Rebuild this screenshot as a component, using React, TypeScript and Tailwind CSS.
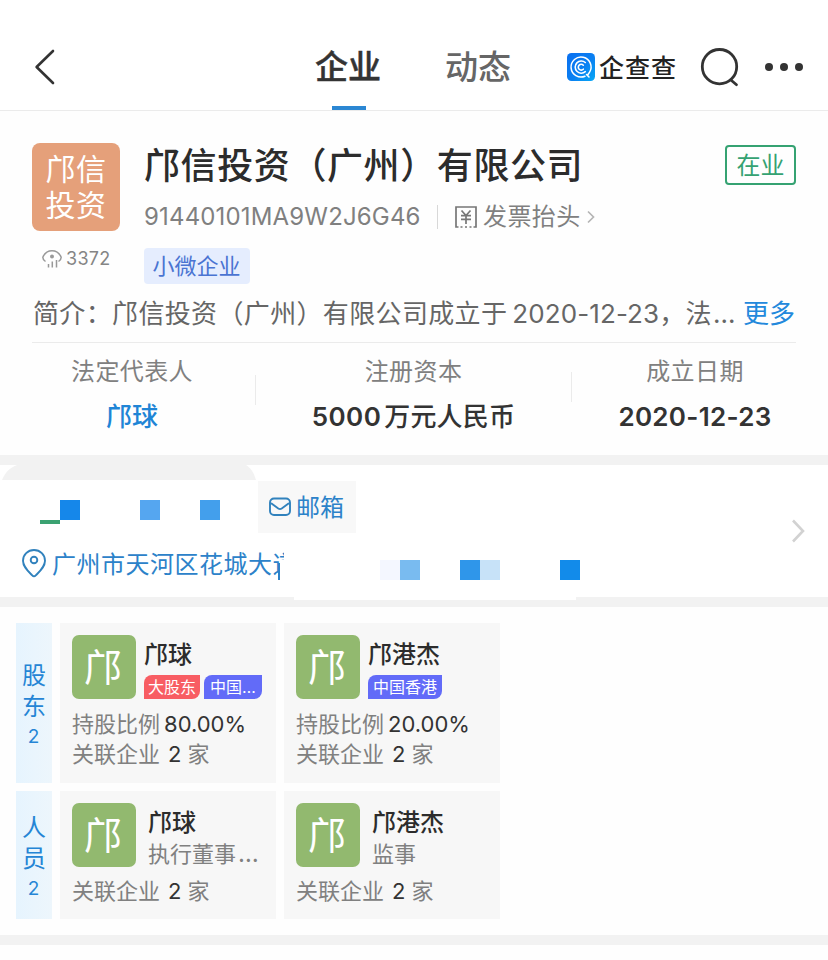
import React from "react";

const divider = "h-[30px] w-px bg-[#ebebeb]";

function Header() {
  return (
    <header className="flex h-[111px] items-start border-b border-[#ebebeb] bg-white">
      <svg className="ml-[34px] mt-[48px] h-[38px] w-[24px]" viewBox="0 0 24 38" fill="none" stroke="#333" strokeWidth="2.6" strokeLinecap="round" strokeLinejoin="round">
        <path d="M19 3 2.6 19 19 35" />
      </svg>
      <nav className="ml-[256px] flex text-[33px] leading-[40px]">
        <div className="flex h-[110px] w-[68px] flex-col items-center pt-[47px] font-medium text-[#333]">
          <span className="whitespace-nowrap [-webkit-text-stroke:0.5px_#333]">企业</span>
          <span className="ml-[2px] mt-[19px] h-[4px] w-[34px] bg-[#2b87d3]" />
        </div>
        <div className="ml-[62px] w-[68px] whitespace-nowrap pt-[47px] text-center font-medium text-[#666]">动态</div>
      </nav>
      <div className="ml-[55px] mt-[53px] flex h-[28px] items-center">
        <svg className="h-[28px] w-[28px]" viewBox="0 0 28 28" fill="none">
          <defs>
            <linearGradient id="brand" x1="0" y1="0" x2="1" y2="1">
              <stop offset="0" stopColor="#0a6ff0" />
              <stop offset="0.55" stopColor="#0a80f2" />
              <stop offset="1" stopColor="#08a9f5" />
            </linearGradient>
          </defs>
          <rect width="28" height="28" rx="4.5" fill="url(#brand)" />
          <g stroke="#fff" strokeLinecap="round">
            <path d="M18 23.2A10 10 0 1 1 22.6 19.2L21 21.5M19.5 21.5 22 24" strokeWidth="1.5" />
            <path d="M18.3 9.5A6.1 6.1 0 1 0 18.3 18.7" strokeWidth="1.6" />
            <path d="M16.3 12.2A2.9 2.9 0 1 0 16.3 16.2" strokeWidth="1.6" />
          </g>
        </svg>
        <span className="ml-[4px] mt-[2px] w-[78px] whitespace-nowrap text-[25px] font-medium leading-[28px] tracking-[1px] text-[#222]">企查查</span>
      </div>
      <svg className="ml-[23px] mt-[47px] h-[42px] w-[40px]" viewBox="0 0 40 42" fill="none" stroke="#333" strokeWidth="2.8" strokeLinecap="round">
        <circle cx="19.5" cy="19.7" r="17.2" />
        <path d="m31.5 33.5 5 4.2" />
      </svg>
      <div className="ml-[25px] mt-[63px] flex gap-[7px]">
        <i className="size-[8px] rounded-full bg-[#333]" />
        <i className="size-[8px] rounded-full bg-[#333]" />
        <i className="size-[8px] rounded-full bg-[#333]" />
      </div>
    </header>
  );
}

function Stat({ label, width, children }: { label: string; width: string; children: React.ReactNode }) {
  return (
    <div className={`${width} whitespace-nowrap text-center`}>
      <div className="text-[24px] leading-[30px] tracking-[0.4px] text-[#808080]">{label}</div>
      <div className="mt-[15px] text-[26px] font-medium leading-[30px] text-[#333]">{children}</div>
    </div>
  );
}

function Company() {
  return (
    <section className="h-[344px] pt-[32px]">
      <div className="flex px-[32px]">
        <div className="w-[88px]">
          <div className="flex size-[88px] flex-col items-center justify-center rounded-[8px] bg-[#e5a07a] text-[30px] leading-[36px] tracking-[0.5px] text-white">
            <span>邝信</span>
            <span>投资</span>
          </div>
          <div className="ml-[10px] mt-[16px] flex h-[24px] items-center whitespace-nowrap">
            <svg className="h-[20px] w-[20px]" viewBox="0 0 20 20" fill="none" stroke="#999" strokeWidth="1.5">
              <path d="M3.5 12.5C1.6 11.2.8 9.5.8 8.2 2.8 4 6 1.8 10 1.8s7.200 2.200 9.200 6.400c0 1.500-.8 3-2.700 4.300" />
              <circle cx="10" cy="7.500" r="2" fill="#999" stroke="none" />
              <path d="M6.500 15v3.500M10.300 12.500v6M14.500 11v7.500" />
            </svg>
            <span className="ml-[4px] text-[18px] leading-[24px] tracking-[0.3px] text-[#858585]">3372</span>
          </div>
        </div>
        <div className="ml-[24px] flex-1">
          <div className="flex h-[44px] items-center justify-between">
            <h1 className="whitespace-nowrap pt-px text-[36px] font-medium leading-[44px] tracking-[0.6px] text-[#2c2c2c]">邝信投资（广州）有限公司</h1>
            <div className="flex h-[40px] w-[71px] items-center justify-center rounded-[4px] border-2 border-[#35a272] pt-px text-[24px] leading-[30px] text-[#35a272]">在业</div>
          </div>
          <div className="mt-[14px] flex h-[32px] items-center whitespace-nowrap text-[24px] leading-[32px] text-[#808080]">
            <span className="w-[293px] tracking-[0.16px]">91440101MA9W2J6G46</span>
            <span className="h-[24px] w-px bg-[#d8d8d8]" />
            <svg className="ml-[17px] h-[22px] w-[22px]" viewBox="0 0 22 22" fill="none" stroke="#777" strokeWidth="1.700">
              <path d="M3.500 21H1V1h20v20h-2.500M5.500 21h2M10 21h2M14.500 21h2M6.500 4.500l4.500 5 4.500-5M6 9.700h10M6 13.300h10M11 9.500V18" />
            </svg>
            <span className="ml-[6px] tracking-[0.4px]">发票抬头</span>
            <svg className="ml-[6px] h-[14px] w-[8px]" viewBox="0 0 8 14" fill="none" stroke="#b5b5b5" strokeWidth="1.700">
              <path d="m1 1.500 5.500 5.500L1 12.500" />
            </svg>
          </div>
          <div className="mt-[15px] flex h-[36px] w-[106px] items-center justify-center rounded-[4px] bg-[#e5edfe] pr-px text-[22px] leading-[30px] text-[#4a74d2]">小微企业</div>
        </div>
      </div>
      <div className="mx-[32px] mt-[14px] flex h-[45px] justify-between whitespace-nowrap border-b border-[#ebebeb] text-[26px] leading-[32px] text-[#666]">
        <span className="ml-px tracking-[0.35px]">简介：邝信投资（广州）有限公司成立于<span className="ml-[5px] tracking-[0.1px]">2020-12-23</span>，法<span className="ml-px tracking-[1px]">…</span></span>
        <span className="mr-px text-[#2389dc]">更多</span>
      </div>
      <div className="ml-[8px] flex pt-[14px]">
        <Stat label="法定代表人" width="w-[248px]">
          <span className="text-[#1f85d6]">邝球</span>
        </Stat>
        <div className={`${divider} -ml-px mt-[18px]`} />
        <Stat label="注册资本" width="w-[315px]">
          <span className="mr-[3px] font-semibold tracking-[0.4px]">5000</span>
          <span className="tracking-[0.2px]">万元人民币</span>
        </Stat>
        <div className={`${divider} mt-[15px]`} />
        <Stat label="成立日期" width="w-[246px]">
          <span className="font-semibold tracking-[0.3px]">2020-12-23</span>
        </Stat>
      </div>
    </section>
  );
}

function Contact() {
  return (
    <section className="relative h-[132px] bg-white">
      <svg className="absolute left-0 top-0 h-[15px] w-[260px]" viewBox="0 0 260 15">
        <path d="M2 15C5 8 9 3 17 0H246C251 3 254 8 256 15Z" fill="#f2f2f2" />
      </svg>
      <div className="flex pt-[16px]">
        <div className="ml-[258px] flex h-[52px] w-[98px] items-center bg-[#f8f8f8] pl-[11px]">
          <svg className="h-[20px] w-[22px]" viewBox="0 0 22 20" fill="none" stroke="#3182bd" strokeWidth="1.900" strokeLinecap="round" strokeLinejoin="round">
            <rect x="1" y="1.500" width="20" height="16.500" rx="4" />
            <path d="m2.500 6.500 6.800 5c1 .7 2.400.7 3.400 0l6.800-5" />
          </svg>
          <span className="ml-[5px] mt-[2px] whitespace-nowrap text-[24px] leading-[32px] text-[#2c82c9]">邮箱</span>
        </div>
      </div>
      <div className="ml-[22px] mt-[14px] flex h-[32px] items-center">
        <svg className="h-[29px] w-[24px] shrink-0" viewBox="0 0 24 29" fill="none" stroke="#3182bd" strokeWidth="1.900" strokeLinejoin="round">
          <path d="M12 1C5.800 1 1 5.800 1 11.700c0 5.800 4.500 9.800 9.200 14.700 1.200 1.200 2.400 1.200 3.600 0C18.500 21.500 23 17.500 23 11.700 23 5.800 18.200 1 12 1Z" />
          <circle cx="12" cy="11" r="3.300" />
        </svg>
        <span className="ml-[6px] mt-[4px] w-[232px] overflow-hidden whitespace-nowrap text-[24px] leading-[32px] tracking-[0.500px] text-[#2c82c9]">广州市天河区花城大道</span>
      </div>
      <i className="absolute left-[40px] top-[55px] h-[4px] w-[20px] bg-[#3ba272]" />
      <i className="absolute left-[60px] top-[35px] size-[20px] bg-[#1587ea]" />
      <i className="absolute left-[140px] top-[35px] size-[20px] bg-[#55a6f0]" />
      <i className="absolute left-[200px] top-[35px] size-[20px] bg-[#439fec]" />
      <i className="absolute left-[280px] top-[95px] h-[20px] w-[6px] bg-white" />
      <i className="absolute left-[278px] top-[98px] h-[17px] w-[2px] bg-[#2c82c9]" />
      <i className="absolute left-[380px] top-[95px] size-[20px] bg-[#f4f7ff]" />
      <i className="absolute left-[400px] top-[95px] size-[20px] bg-[#79bbf0]" />
      <i className="absolute left-[460px] top-[95px] size-[20px] bg-[#2f96ea]" />
      <i className="absolute left-[480px] top-[95px] size-[20px] bg-[#c7e2f8]" />
      <i className="absolute left-[560px] top-[95px] size-[20px] bg-[#128bea]" />
      <svg className="absolute left-[791px] top-[54px] h-[24px] w-[15px]" viewBox="0 0 15 24" fill="none" stroke="#d2d2d2" strokeWidth="2.600">
        <path d="m2 1.500 10 10.500L2 22.500" />
      </svg>
    </section>
  );
}

function Side({ chars, pad, height }: { chars: string[]; pad: string; height: string }) {
  return (
    <div className={`flex w-[36px] flex-col items-center bg-gradient-to-r from-[#e6f4fe] to-[#edf6fc] text-[24px] leading-[31px] text-[#2585d5] ${pad} ${height}`}>
      <span>{chars[0]}</span>
      <span>{chars[1]}</span>
      <span className="mr-px text-[19px] leading-[29px]">2</span>
    </div>
  );
}

function Avatar() {
  return <div className="flex size-[64px] shrink-0 items-center justify-center rounded-[7px] bg-[#92b96f] pr-[2px] text-[38px] leading-[44px] text-white">邝</div>;
}

function Linked() {
  return (
    <div className="text-[22px] leading-[30px] text-[#808080]">
      关联企业<span className="ml-[8px] mr-[6px] text-[#333]">2</span>家
    </div>
  );
}

const tag = "flex h-[24px] items-center justify-center rounded-br-[8px] rounded-tl-[8px] text-[16px] leading-[22px] text-white";

function Shareholder({ name, ratio, children }: { name: string; ratio: string; children: React.ReactNode }) {
  return (
    <div className="h-[160px] w-[216px] whitespace-nowrap bg-[#f7f7f7] pl-[12px] pt-[12px]">
      <div className="flex">
        <Avatar />
        <div className="ml-[8px] pt-[5px]">
          <div className="text-[24px] font-medium leading-[30px] text-[#2c2c2c]">{name}</div>
          <div className="mt-[5px] flex gap-[4px]">{children}</div>
        </div>
      </div>
      <div className="mt-[10px] text-[22px] leading-[30px] text-[#808080]">
        持股比例<span className="ml-[4px] text-[#333]">{ratio}</span>
      </div>
      <Linked />
    </div>
  );
}

function Staff({ name, role, truncated }: { name: string; role: string; truncated?: boolean }) {
  return (
    <div className="h-[128px] w-[216px] whitespace-nowrap bg-[#f7f7f7] pl-[12px] pt-[12px]">
      <div className="mb-[6px] flex h-[67px]">
        <Avatar />
        <div className="ml-[12px] pt-[5px]">
          <div className="text-[24px] font-medium leading-[30px] text-[#2c2c2c]">{name}</div>
          <div className="mt-px text-[22px] leading-[30px] text-[#808080]">
            {role}
            {truncated && <span className="ml-[2px] text-[24px] leading-[20px]">…</span>}
          </div>
        </div>
      </div>
      <Linked />
    </div>
  );
}

export default function App() {
  return (
    <main className="h-[960px] w-[828px] overflow-hidden bg-[#fefefe] font-['Inter','Noto_Sans_CJK_SC',sans-serif]">
      <Header />
      <Company />
      <div className="h-[10px] bg-[#f2f2f2]" />
      <Contact />
      <div className="h-[10px] bg-[#f2f2f2]">
        <div className="ml-[294px] h-[3px] w-[282px] bg-white" />
      </div>
      <section className="flex h-[328px] flex-col gap-[8px] pl-[16px] pt-[16px]">
        <div className="flex gap-[8px]">
          <Side chars={["股", "东"]} pad="pt-[37px]" height="h-[160px]" />
          <Shareholder name="邝球" ratio="80.00%">
            <span className={`${tag} w-[56px] bg-[#f85d63]`}>大股东</span>
            <span className={`${tag} w-[58px] bg-[#626bf8]`}>中国…</span>
          </Shareholder>
          <Shareholder name="邝港杰" ratio="20.00%">
            <span className={`${tag} w-[74px] bg-[#626bf8]`}>中国香港</span>
          </Shareholder>
        </div>
        <div className="flex gap-[8px]">
          <Side chars={["人", "员"]} pad="pt-[21px]" height="h-[128px]" />
          <Staff name="邝球" role="执行董事" truncated />
          <Staff name="邝港杰" role="监事" />
        </div>
      </section>
      <div className="h-[10px] bg-[#f2f2f2]" />
    </main>
  );
}
